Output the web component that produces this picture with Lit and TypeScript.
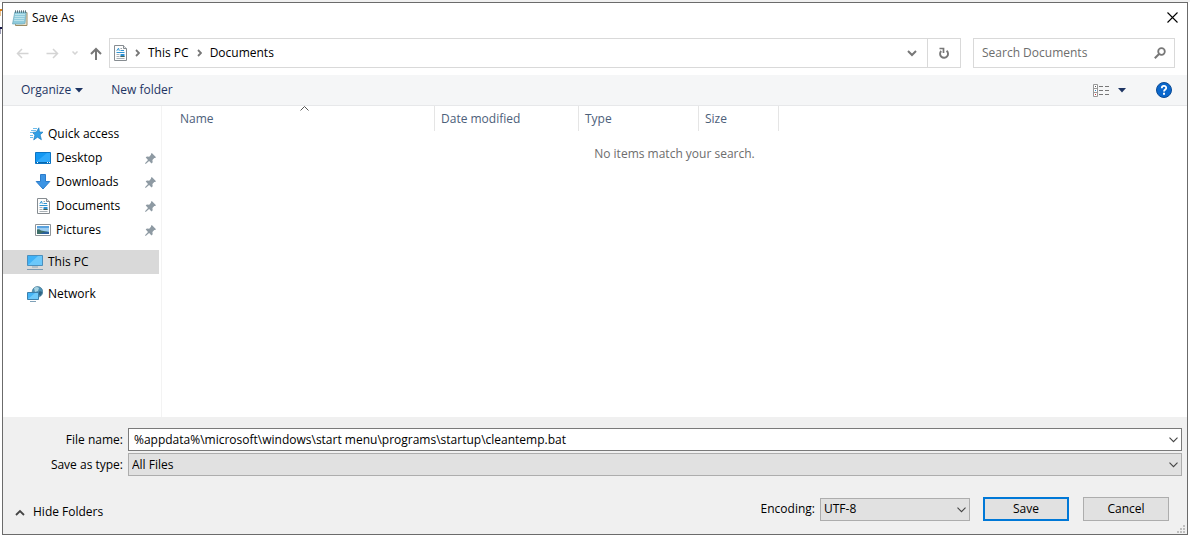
import { LitElement, html, svg, css } from "lit";
import { customElement, property } from "lit/decorators.js";
import { classMap } from "lit/directives/class-map.js";

const documentIcon = html`<svg width="13" height="16" viewBox="0 0 13 16" aria-hidden="true">
  <path d="M.5.5h9l3 3v12H.5z" fill="#fdfdfd" stroke="#868c91" />
  <path d="M9.5.5v3h3" fill="#e4e7e9" stroke="#868c91" />
  <path d="M2.800 5.800l1.700-2.600.8 2.600M6.500 5.500h3.500M2.500 7.500h8" fill="none" stroke="#2f95d3" />
  <path d="M6.500 3.500h1.500" stroke="#9aa4ab" />
  <path d="M2.500 9.500h3M2.500 11.500h3M2.500 13.500h8" stroke="#a9b1b7" />
  <path d="M6.500 9h4v3h-4z" fill="#2b8fd4" />
  <path d="M6.500 11h4v1h-4z" fill="#47614f" />
</svg>`;

const notepadIcon = html`<svg width="16" height="16" viewBox="0 0 16 16" aria-hidden="true">
  <path d="M4 2.500h11v13H3.500z" fill="#efe6cf" stroke="#9b8a62" />
  <path d="M2.800 2h11.400l-1.200 11.500L10 14H.5z" fill="#8fcbdc" stroke="#6fa9bb" stroke-width=".7" />
  <path d="M3 4.500h10M2.700 6.500h10M2.400 8.500h10M2.100 10.500h10" stroke="#c7e8f0" stroke-width=".8" />
  <path d="M3.500.3v2.600M5.500.3v2.600M7.500.3v2.600M9.500.3v2.600M11.500.3v2.600M13.500.3v2.600" stroke="#4f6a74" stroke-width=".9" />
</svg>`;

const starIcon = html`<svg width="16" height="14" viewBox="-3 0 16 14" aria-hidden="true">
  <path d="M8.800.8l.7 4.200 3.500.2-2.900 2.600 1.300 4.900-3.900-2.500-3.800 2.700 1.200-4.800-2.400-2.700 3.800-.4z" fill="#2f9fe6" stroke="#1f7fc0" stroke-width=".7" />
  <path d="M3 1.500h4M1 3.500h5M0 5.500h3M0 8.500h3M0 10.500h3" stroke="#5db6ea" stroke-width=".9" />
</svg>`;

const desktopIcon = html`<svg width="16" height="12" viewBox="0 0 16 12" aria-hidden="true">
  <path d="M.5.5h15v11H.5z" fill="#1398f3" stroke="#0c74c4" />
  <path d="M1 10L12 1h3v9z" fill="#30a9fb" />
  <path d="M1 10.500h14" stroke="#0868ad" />
  <path d="M2 10.500h1M12 10.500h1M14 10.500h1" stroke="#fff" />
</svg>`;

const downloadIcon = html`<svg width="16" height="16" viewBox="0 0 16 16" aria-hidden="true">
  <path d="M5.500.5h5v7h4.300L8 15 1.200 7.500h4.300z" fill="#3c94e4" stroke="#2b7ccb" />
</svg>`;

const pictureIcon = html`<svg width="16" height="12" viewBox="0 0 16 12" aria-hidden="true">
  <path d="M.5.5h15v11H.5z" fill="#fff" stroke="#8e9499" />
  <path d="M2 2h12v8H2z" fill="#9ccdf2" />
  <path d="M2 2h12v2H2z" fill="#5aa2de" />
  <path d="M2 5.500q2-1 4 1l8 1.500V10H2z" fill="#3d6f68" />
  <path d="M5 10q4-3 9-2v2z" fill="#2a5f9c" />
</svg>`;

const computerIcon = html`<svg width="16" height="16" viewBox="0 0 16 16" aria-hidden="true">
  <path d="M.5 1.500h15v10H.5z" fill="#3fb2f7" stroke="#4b8fbd" />
  <path d="M1 11L11 2h4v9z" fill="#6cc8fb" />
  <path d="M5 13h6" stroke="#8fa6b6" />
  <path d="M0 15.500h16" stroke="#7c9ab2" />
</svg>`;

const networkIcon = html`<svg width="16" height="16" viewBox="0 0 16 16" aria-hidden="true">
  <circle cx="10.500" cy="5.800" r="5.300" fill="#4f92b5" stroke="#39718f" stroke-width=".6" />
  <path d="M7 2q3-2 5 0l-1 3-3 1z" fill="#a7d3e3" />
  <path d="M12.500 5l3 1-2 4-2-2z" fill="#2f6585" />
  <path d="M.5 6.500h11v7H.5z" fill="#45b4f6" stroke="#3c80ac" />
  <path d="M1 13l7-6h3v6z" fill="#6fcafb" />
  <path d="M3 15.500h6" stroke="#7fa1b8" />
</svg>`;

const pinIcon = html`<svg width="11" height="11" viewBox="0 0 11 11" aria-hidden="true">
  <path d="M6.800 0L11 4.200l-.9.900-.8-.1-1.900 1.900.3 2.300-1.200 1.200L4.100 8 .7 11 0 10.300 3 6.900.7 4.600l1.200-1.200 2.300.3L6 1.800l-.1-.9z" fill="#8e9aa3" />
</svg>`;

const chevron = (d: string, width: number, height: number, weight: number) =>
  html`<svg width=${width} height=${height} viewBox="0 0 ${width} ${height}" aria-hidden="true">
    ${svg`<path d=${d} fill="none" stroke="currentColor" stroke-width=${weight} />`}
  </svg>`;

const crumbChevron = chevron("M1 1l3 3-3 3", 5, 8, 1.8);
const thinDown = chevron("M.5.7l4 4 4-4", 9, 6, 1.1);
const boldDown = chevron("M1 1l4 4 4-4", 10, 7, 2);
const boldUp = chevron("M1 6l4-4 4 4", 10, 7, 1.8);
const sortUp = chevron("M.5 4.500l4-4 4 4", 9, 5, 1);
const solidDown = html`<svg width="8" height="5" viewBox="0 0 8 5" aria-hidden="true"><path d="M0 0h8L4 4.500z" fill="#1e3563" /></svg>`;

const base = css`
  * { box-sizing: border-box; }
  svg { display: block; flex: none; }
  button, input, select { font: inherit; color: inherit; margin: 0; border-radius: 0; }
  button { background: none; border: 0; padding: 0; }
`;

interface Place {
  name: string;
  icon: unknown;
  nested?: boolean;
  selected?: boolean;
}

const groups: Place[][] = [
  [
    { name: "Quick access", icon: starIcon },
    { name: "Desktop", icon: desktopIcon, nested: true },
    { name: "Downloads", icon: downloadIcon, nested: true },
    { name: "Documents", icon: documentIcon, nested: true },
    { name: "Pictures", icon: pictureIcon, nested: true },
  ],
  [{ name: "This PC", icon: computerIcon, selected: true }],
  [{ name: "Network", icon: networkIcon }],
];

@customElement("places-pane")
export class PlacesPane extends LitElement {
  static styles = [base, css`
    :host { display: flex; flex-direction: column; gap: 8px; width: 159px; flex: none; padding: 16px 2px 16px 0; border-right: 1px solid #f3f3f3; }
    .group { list-style: none; margin: 0; padding: 0; }
    .place { display: flex; align-items: center; height: 24px; padding: 0 3px 0 24px; color: #000; text-decoration: none; }
    .nested { padding-left: 32px; }
    .selected { background: #d9d9d9; }
    .icon { display: flex; justify-content: center; width: 16px; }
    .name { flex: 1; padding-left: 5px; }
  `];

  render() {
    return groups.map((group) => html`<ul class="group">
      ${group.map((p) => html`<li>
        <a href="#" class=${classMap({ place: true, nested: !!p.nested, selected: !!p.selected })}>
          <span class="icon">${p.icon}</span><span class="name">${p.name}</span>${p.nested ? pinIcon : ""}
        </a>
      </li>`)}
    </ul>`);
  }
}

@customElement("file-list")
export class FileList extends LitElement {
  static styles = [base, css`
    :host { display: block; flex: 1; min-width: 0; }
    .table { width: 605px; margin-left: 12px; table-layout: fixed; border-collapse: separate; border-spacing: 0; }
    .head { position: relative; height: 25px; padding: 0 6px; border-right: 1px solid #e5e5e5; font-weight: 400; text-align: left; color: #4c607a; }
    .name { width: 261px; }
    .date { width: 144px; }
    .type { width: 120px; }
    .size { width: 80px; }
    .sort { position: absolute; top: 0; left: 50%; margin-left: -4px; color: #555; }
    .empty { margin: 15px 0 0; text-align: center; color: #6d6d6d; }
  `];

  render() {
    return html`
      <table class="table">
        <thead><tr>
          <th class="head name" aria-sort="ascending">Name<span class="sort">${sortUp}</span></th>
          <th class="head date">Date modified</th>
          <th class="head type">Type</th>
          <th class="head size">Size</th>
        </tr></thead>
      </table>
      <p class="empty">No items match your search.</p>`;
  }
}

@customElement("app-root")
export class AppRoot extends LitElement {
  @property() fileName = "%appdata%\\microsoft\\windows\\start menu\\programs\\startup\\cleantemp.bat";

  static styles = [base, css`
    :host { display: flex; position: relative; min-height: 100vh; box-sizing: border-box; padding: 2px 2px 1px; background: linear-gradient(#f0f0f0 2px, #fff 2px); font: 12px/16px "Open Sans", "Noto Sans", sans-serif; color: #000; }
    .behind { position: absolute; left: 0; top: 8px; }
    .dialog { flex: 1; min-width: 0; display: flex; flex-direction: column; border: 1px solid #6b6b6b; background: #fff; }
    .title { display: flex; align-items: center; gap: 4px; height: 29px; padding: 0 9px; }
    .caption { flex: 1; margin: 0; font-size: 12px; font-weight: 400; }
    .nav { display: flex; align-items: center; height: 43px; padding: 0 12px 1px 13px; color: #777; }
    .arrows { display: flex; align-items: center; width: 93px; }
    .arrows button:disabled { color: #d4d4d4; }
    .back { margin-right: 17px; }
    .recent { margin: 0 12px 0 13px; }
    .address { flex: 1; display: flex; align-items: center; height: 30px; border: 1px solid #d9d9d9; }
    .crumbs { flex: 1; display: flex; align-items: center; gap: 8px; padding-left: 4px; }
    .crumb { color: #000; text-decoration: none; }
    .drop { padding: 0 10px; }
    .refresh { display: flex; align-items: center; justify-content: center; width: 33px; height: 28px; border-left: 1px solid #d9d9d9; }
    .search { display: flex; align-items: center; width: 202px; height: 30px; margin-left: 12px; padding: 0 8px; border: 1px solid #d9d9d9; }
    .query { flex: 1; min-width: 0; padding: 0; border: 0; outline: 0; background: none; }
    .query::placeholder { color: #6d6d6d; opacity: 1; }
    .tools { display: flex; align-items: center; height: 31px; padding: 0 15px 0 18px; border-bottom: 1px solid #e7e8ea; background: #f5f6f7; color: #1e3563; }
    .organize { display: flex; align-items: center; gap: 4px; margin-right: 28px; }
    .view { display: flex; align-items: center; gap: 9px; margin: 0 30px 0 auto; }
    .body { flex: 1; display: flex; min-height: 200px; }
    .form { padding: 11px 5px 13px; background: #f0f0f0; }
    .fields { display: grid; grid-template-columns: 115px 1fr; gap: 2px 5px; align-items: center; text-align: right; }
    .box { position: relative; display: flex; }
    .box svg { position: absolute; right: 4px; top: 9px; color: #444; pointer-events: none; }
    .field { flex: 1; min-width: 0; height: 23px; padding: 0 20px 0 3px; border: 1px solid #adadad; outline: 0; background: #e1e1e1; appearance: none; }
    .text { padding-left: 5px; border-color: #7a7a7a; background: #fff; }
    .actions { display: flex; align-items: center; margin-top: 21px; padding: 0 13px 0 7px; }
    .hide { display: flex; align-items: center; gap: 8px; margin: 6px auto 0 0; }
    .hide svg { color: #444; }
    .encoding { width: 150px; margin: 0 13px 0 5px; }
    .push { width: 86px; height: 24px; border: 1px solid #adadad; background: #e1e1e1; }
    .default { margin-right: 14px; border: 2px solid #0078d7; }
    .grip { position: absolute; right: 5px; bottom: 3px; }
  `];

  render() {
    return html`
      <svg class="behind" width="2" height="28" viewBox="0 0 2 28" aria-hidden="true">
        <path d="M0 1h2v2H0z" fill="#d98018" />
        <path d="M0 3h1v5H0z" fill="#eac08a" />
        <path d="M0 19h2v2H0z" fill="#15154a" />
        <path d="M0 21h1v5H0z" fill="#9a9ab4" />
      </svg>
      <main class="dialog">
        <header class="title">
          ${notepadIcon}
          <h1 class="caption">Save As</h1>
          <button aria-label="Close">
            <svg width="11" height="11" viewBox="0 0 11 11"><path d="M.5.5l10 10M10.500.5l-10 10" stroke="#000" stroke-width="1.100" /></svg>
          </button>
        </header>

        <nav class="nav">
          <div class="arrows">
            <button class="back" disabled aria-label="Back">
              <svg width="13" height="11" viewBox="0 0 13 11"><path d="M12.500 5.500H1.500M6 1L1.500 5.500 6 10" fill="none" stroke="currentColor" stroke-width="1.500" /></svg>
            </button>
            <button disabled aria-label="Forward">
              <svg width="13" height="11" viewBox="0 0 13 11"><path d="M.5 5.500h11M7 1l4.500 4.500L7 10" fill="none" stroke="currentColor" stroke-width="1.500" /></svg>
            </button>
            <button class="recent" disabled aria-label="Recent locations">${chevron("M.5.5l2.500 2.500L5.500.5", 6, 4, 1.5)}</button>
            <button aria-label="Up">
              <svg width="12" height="13" viewBox="0 0 12 13"><path d="M6 13V2M1 7l5-5 5 5" fill="none" stroke="currentColor" stroke-width="2" /></svg>
            </button>
          </div>
          <div class="address">
            <div class="crumbs">
              ${documentIcon}${crumbChevron}
              <a class="crumb" href="#">This PC</a>${crumbChevron}
              <a class="crumb" href="#">Documents</a>
            </div>
            <button class="drop" aria-label="Previous locations">${boldDown}</button>
            <button class="refresh" aria-label="Refresh">
              <svg width="12" height="12" viewBox="0 0 12 12">
                <path d="M3.200 4A4 4 0 1 0 8.600 3.700" fill="none" stroke="currentColor" stroke-width="1.900" />
                <path d="M1.500 1.500h4v4.500" fill="none" stroke="currentColor" stroke-width="1.700" />
              </svg>
            </button>
          </div>
          <label class="search">
            <input class="query" type="search" placeholder="Search Documents" aria-label="Search Documents" />
            <svg width="12" height="12" viewBox="0 0 12 12"><circle cx="7.500" cy="4.500" r="3.300" fill="none" stroke="currentColor" stroke-width="1.800" /><path d="M5 7L.8 11.200" stroke="currentColor" stroke-width="2" /></svg>
          </label>
        </nav>

        <div class="tools">
          <button class="organize">Organize ${solidDown}</button>
          <button>New folder</button>
          <button class="view" aria-label="Change your view">
            <svg width="16" height="13" viewBox="0 0 16 13">
              <path d="M.5.5h4v12h-4zM.5 4.500h4M.5 8.500h4" fill="#fff" stroke="#999" />
              <path d="M2 2.500h1" stroke="#555" /><path d="M2 6.500h1" stroke="#2a86d0" /><path d="M2 10.500h1" stroke="#c33" />
              <path d="M6 2.500h4M12 2.500h4M6 6.500h4M12 6.500h4M6 10.500h4M12 10.500h4" stroke="#777" />
            </svg>
            ${solidDown}
          </button>
          <button aria-label="Help">
            <svg width="16" height="16" viewBox="0 0 16 16">
              <circle cx="8" cy="8" r="7.500" fill="#0a67cc" stroke="#0a4a94" />
              <path d="M5.800 6.200C5.800 3.200 10.200 3.200 10.200 5.900 10.200 7.500 8 7.500 8 9.600" fill="none" stroke="#fff" stroke-width="1.800" />
              <path d="M7 10.800h2v2H7z" fill="#fff" />
            </svg>
          </button>
        </div>

        <div class="body"><places-pane></places-pane><file-list></file-list></div>

        <form class="form" @submit=${(e: Event) => e.preventDefault()}>
          <div class="fields">
            <label for="file-name">File name:</label>
            <div class="box"><input id="file-name" class="field text" .value=${this.fileName} />${thinDown}</div>
            <label for="save-type">Save as type:</label>
            <div class="box"><select id="save-type" class="field"><option>All Files</option></select>${thinDown}</div>
          </div>
          <div class="actions">
            <button type="button" class="hide">${boldUp} Hide Folders</button>
            <label for="encoding">Encoding:</label>
            <div class="box encoding"><select id="encoding" class="field"><option>UTF-8</option></select>${thinDown}</div>
            <button class="push default">Save</button>
            <button type="button" class="push">Cancel</button>
          </div>
        </form>
        <svg class="grip" width="8" height="8" viewBox="0 0 8 8" aria-hidden="true">
          <path d="M6 0h2v2H6zM3 3h2v2H3zM6 3h2v2H6zM0 6h2v2H0zM3 6h2v2H3zM6 6h2v2H6z" fill="#bfbfbf" />
        </svg>
      </main>`;
  }
}
